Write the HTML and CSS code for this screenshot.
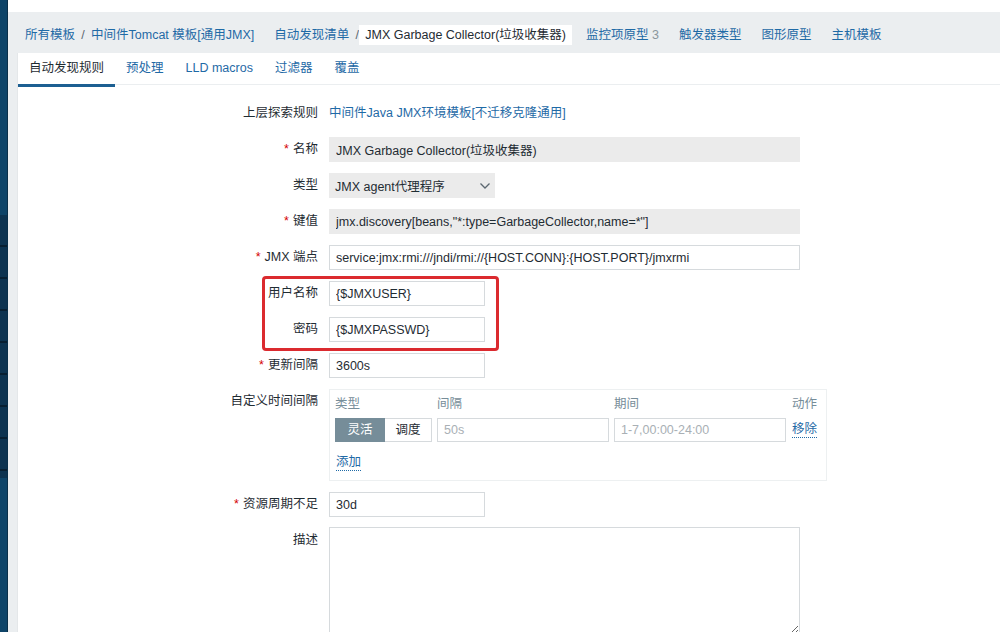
FILE: index.html
```html
<!doctype html>
<html lang="zh-CN">
	<head>
		<meta charset="UTF-8" />
		<meta name="viewport" content="width=device-width, initial-scale=1.0" />
		<title>自动发现规则</title>
		<link rel="stylesheet" href="styles.css">
	</head>
	<body>
		<aside class="sidebar">
			<div class="sidebar-menu"></div>
		</aside>

		<div class="page">
			<div class="top"></div>

			<div class="layout">
				<nav class="breadcrumbs">
					<div class="crumb-group">
						<a href="#" class="crumb">所有模板</a>
						<span class="sep">/</span>
						<a href="#" class="crumb">中间件Tomcat 模板[通用JMX]</a>
					</div>
					<div class="crumb-group">
						<a href="#" class="crumb">自动发现清单</a>
						<span class="sep">/</span>
						<span class="crumb current">JMX Garbage Collector(垃圾收集器)</span>
					</div>
					<a href="#" class="crumb">监控项原型 <span class="count">3</span></a>
					<a href="#" class="crumb">触发器类型</a>
					<a href="#" class="crumb">图形原型</a>
					<a href="#" class="crumb">主机模板</a>
				</nav>

				<main class="panel">
					<ul class="tabs">
						<li class="tab active">自动发现规则</li>
						<li class="tab">预处理</li>
						<li class="tab">LLD macros</li>
						<li class="tab">过滤器</li>
						<li class="tab">覆盖</li>
					</ul>

					<form class="form">
						<div class="row">
							<label class="label">上层探索规则</label>
							<div class="field"><a href="#" class="link">中间件Java JMX环境模板[不迁移克隆通用]</a></div>
						</div>

						<div class="row">
							<label class="label required">名称</label>
							<input class="input wide readonly" type="text" value="JMX Garbage Collector(垃圾收集器)" readonly />
						</div>

						<div class="row">
							<label class="label">类型</label>
							<div class="select">
								<span>JMX agent代理程序</span>
								<svg width="12" height="8" viewBox="0 0 12 8"><path d="M1.5 1.5 L6 6 L10.5 1.5" fill="none" stroke="#5b6770" stroke-width="1.3" /></svg>
							</div>
						</div>

						<div class="row">
							<label class="label required">键值</label>
							<input class="input wide readonly" type="text" value='jmx.discovery[beans,"*:type=GarbageCollector,name=*"]' readonly />
						</div>

						<div class="row">
							<label class="label required">JMX 端点</label>
							<input class="input wide" type="text" value="service:jmx:rmi:///jndi/rmi://{HOST.CONN}:{HOST.PORT}/jmxrmi" />
						</div>

						<div class="row">
							<label class="label">用户名称</label>
							<input class="input short" type="text" value="{$JMXUSER}" />
						</div>

						<div class="row">
							<label class="label">密码</label>
							<input class="input short" type="text" value="{$JMXPASSWD}" />
						</div>

						<div class="row">
							<label class="label required">更新间隔</label>
							<input class="input short" type="text" value="3600s" />
						</div>

						<div class="row">
							<label class="label top-label">自定义时间间隔</label>
							<div class="intervals">
								<div class="intervals-grid">
									<span class="col-head">类型</span>
									<span class="col-head">间隔</span>
									<span class="col-head">期间</span>
									<span class="col-head">动作</span>

									<div class="segmented">
										<span class="seg selected">灵活</span>
										<span class="seg">调度</span>
									</div>
									<input class="input" type="text" placeholder="50s" />
									<input class="input" type="text" placeholder="1-7,00:00-24:00" />
									<a href="#" class="action">移除</a>
								</div>
								<a href="#" class="action add">添加</a>
							</div>
						</div>

						<div class="row">
							<label class="label required">资源周期不足</label>
							<input class="input short" type="text" value="30d" />
						</div>

						<div class="row">
							<label class="label top-label">描述</label>
							<textarea class="textarea"></textarea>
						</div>

						<!-- annotation drawn over the user/password rows -->
						<div class="highlight"></div>
					</form>
				</main>
			</div>
		</div>
	</body>
</html>
```

FILE: styles.css
```css
html,
body {
	margin: 0;
	padding: 0;
}

body {
	display: flex;
	height: 100vh;
	overflow: hidden;
	font-family: "Liberation Sans", "Noto Sans CJK SC", sans-serif;
	font-size: 12.5px;
	color: #1f2c33;
	background-color: #fff;
}

a {
	color: #1f6aa6;
	text-decoration: none;
}

.sidebar {
	width: 7px;
	flex-shrink: 0;
	background-color: #0e4468;
	border-right: 1px solid #0a2f49;
	padding-top: 215px;
}

.sidebar-menu {
	height: 263px;
	background-color: #0d3350;
	background-image: repeating-linear-gradient(
		to bottom,
		transparent 0,
		transparent 30px,
		#081f31 30px,
		#081f31 32px
	);
}

.page {
	flex: 1;
	display: flex;
	flex-direction: column;
	min-width: 0;
	min-height: 0;
}

.top {
	height: 12px;
	flex-shrink: 0;
	background-color: #fff;
}

.layout {
	flex: 1;
	min-height: 0;
	display: flex;
	flex-direction: column;
	background-color: #ebeef0;
	padding-left: 10px;
}

/* Breadcrumbs */

.breadcrumbs {
	flex-shrink: 0;
	display: flex;
	align-items: center;
	gap: 8px;
	padding: 13px 0 8px 1px;
	white-space: nowrap;
}

.crumb-group {
	display: flex;
	align-items: center;
}

.crumb {
	display: inline-block;
	padding: 3px 6px;
	line-height: 14px;
}

.crumb.current {
	background-color: #fff;
	color: #1f2c33;
}

.sep {
	color: #5b6770;
	width: 4px;
	text-align: center;
}

.count {
	color: #8a969d;
}

/* Panel */

.panel {
	flex: 1;
	min-height: 0;
	overflow: hidden;
	background-color: #fff;
	border-left: 1px solid #e4e7e9;
	margin-left: -1px;
}

.tabs {
	display: flex;
	margin: 0;
	padding: 0;
	list-style: none;
	border-bottom: 1px solid #ebeef0;
	height: 31px;
}

.tab {
	padding: 0 11px;
	line-height: 30px;
	color: #1f6aa6;
	border-bottom: 3px solid transparent;
	margin-bottom: -3px;
}

.tab.active {
	color: #1f2c33;
	border-bottom-color: #1c5f92;
}

/* Form */

.form {
	position: relative;
	padding-top: 16px;
}

.row {
	display: flex;
	align-items: center;
	margin-bottom: 11px;
}

.row:has(.top-label) {
	align-items: flex-start;
}

.label {
	width: 300px;
	flex-shrink: 0;
	margin-right: 11px;
	text-align: right;
	line-height: 25px;
}

.required::before {
	content: "*";
	color: #d40000;
	margin-right: 4px;
}

.field {
	line-height: 25px;
}

.input {
	box-sizing: border-box;
	height: 25px;
	padding: 0 6px;
	border: 1px solid #d6dadd;
	background-color: #fff;
	font: inherit;
	color: #1f2c33;
	outline: none;
}

.input::placeholder {
	color: #a9b0b5;
}

.input.wide {
	width: 471px;
}

.input.short {
	width: 156px;
}

.input.readonly {
	background-color: #ebebeb;
	border-color: #ebebeb;
}

.select {
	box-sizing: border-box;
	width: 166px;
	height: 25px;
	display: flex;
	align-items: center;
	justify-content: space-between;
	padding: 0 4px 0 6px;
	background-color: #ebebeb;
}

/* Custom intervals */

.intervals {
	box-sizing: border-box;
	width: 498px;
	border: 1px solid #edf0f1;
	padding: 5px 4px 9px 5px;
}

.intervals-grid {
	display: grid;
	grid-template-columns: 97px 172px 172px auto;
	column-gap: 5px;
	row-gap: 4px;
	align-items: center;
	white-space: nowrap;
}

.intervals-grid .input {
	width: 100%;
	height: 24px;
}

.col-head {
	color: #768d99;
	line-height: 19px;
}

.col-head:nth-child(4) {
	padding-left: 1px;
}

.segmented {
	display: flex;
	height: 24px;
}

.seg {
	box-sizing: border-box;
	line-height: 22px;
	text-align: center;
	border: 1px solid #d6dadd;
}

.seg.selected {
	width: 50px;
	background-color: #768d99;
	border-color: #768d99;
	color: #fff;
}

.seg:not(.selected) {
	width: 47px;
	border-left: 0;
}

.action {
	justify-self: start;
	margin-left: 1px;
	line-height: 15px;
	border-bottom: 1px dotted #1f6aa6;
}

.action.add {
	display: inline-block;
	margin-top: 13px;
}

.textarea {
	box-sizing: border-box;
	width: 471px;
	height: 108px;
	margin-top: -1px;
	border: 1px solid #d6dadd;
	font: inherit;
}

/* Red annotation box around the credential fields */

.highlight {
	position: absolute;
	left: 244px;
	top: 191px;
	width: 237px;
	height: 75px;
	box-sizing: border-box;
	border: 3px solid #db2a2f;
	border-radius: 4px;
	pointer-events: none;
}
```
